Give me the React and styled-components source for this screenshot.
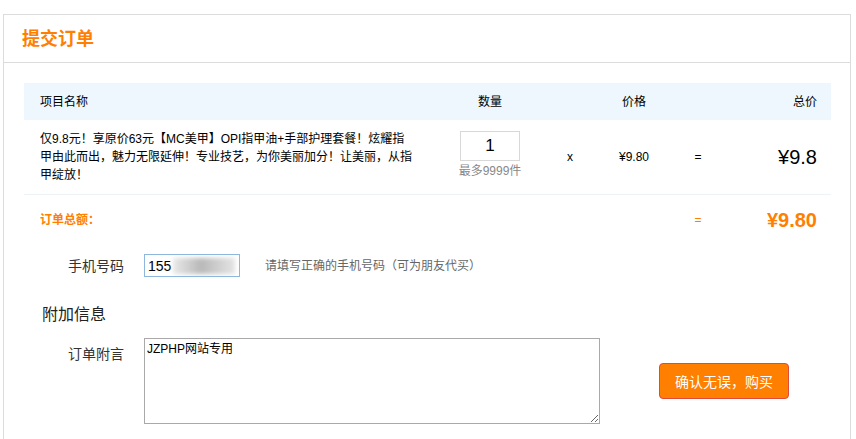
import React from "react";
import styled, { createGlobalStyle } from "styled-components";

const Global = createGlobalStyle`
  html, body { margin: 0; padding: 0; background: #fff; }
  body {
    font-family: "Liberation Sans", "Noto Sans CJK SC", sans-serif;
    color: #333;
    font-size: 12px;
  }
  * { box-sizing: border-box; }
`;

const Panel = styled.div`
  margin: 14px 0 0 3px;
  width: 848px;
  height: 440px;
  border: 1px solid #dcdcdc;
  border-bottom: none;
`;

const PanelHead = styled.div`
  height: 48px;
  border-bottom: 1px solid #dcdcdc;
  display: flex;
  align-items: center;
  padding-left: 18px;
`;

const Title = styled.h2`
  margin: 0;
  font-size: 18px;
  font-weight: bold;
  color: #ff8000;
  line-height: 24px;
`;

const PanelBody = styled.div`
  padding: ${(p) => p.$pt || "20px"} 19px 0 20px;
`;

const cols = "416px 100px 60px 68px 60px 102px";

const HeadRow = styled.div`
  display: grid;
  grid-template-columns: ${cols};
  height: 37px;
  align-items: center;
  background: #eef7fe;
  font-weight: bold;
  color: #000;
  font-size: 12px;
`;

const Cell = styled.div`
  text-align: ${(p) => p.$align || "center"};
  padding-left: ${(p) => (p.$align === "left" ? "16px" : "0")};
  padding-right: ${(p) => (p.$align === "right" ? "13px" : "0")};
  color: ${(p) => p.$color || "inherit"};
  font-size: ${(p) => p.$size || "12px"};
  font-weight: ${(p) => (p.$bold ? "bold" : "normal")};
  line-height: ${(p) => p.$lh || "18px"};
`;

const ItemRow = styled.div`
  display: grid;
  grid-template-columns: ${cols};
  height: 75px;
  align-items: center;
  border-bottom: 1px solid #eef3f8;
  color: #000;
`;

const NameLine = styled.span`
  display: block;
  white-space: nowrap;
`;

const QtyBox = styled.div`
  display: flex;
  flex-direction: column;
  align-items: center;
  margin-top: -4px;
`;

const QtyInput = styled.div`
  width: 60px;
  height: 30px;
  border: 1px solid #d8d8d8;
  font-size: 17px;
  line-height: 28px;
  text-align: center;
  color: #000;
`;

const QtyNote = styled.div`
  color: #888;
  font-size: 12px;
  line-height: 16px;
  margin-top: 2px;
`;

const TotalRow = styled.div`
  display: grid;
  grid-template-columns: ${cols};
  height: 50px;
  align-items: center;
`;

const FormRow = styled.div`
  display: flex;
  align-items: center;
  margin-top: ${(p) => p.$mt || "0"};
`;

const Label = styled.div`
  width: 100px;
  text-align: right;
  font-size: 14px;
  line-height: 20px;
  color: #333;
  margin-right: 20px;
  align-self: ${(p) => (p.$top ? "flex-start" : "center")};
  padding-top: ${(p) => (p.$top ? "6px" : "0")};
`;

const PhoneInput = styled.div`
  width: 96px;
  height: 23px;
  border: 1px solid #8db7dc;
  display: flex;
  align-items: center;
  padding-left: 3px;
  font-size: 14px;
  color: #000;
  overflow: hidden;
`;

const Blur = styled.span`
  display: inline-block;
  width: 62px;
  height: 16px;
  margin-left: 2px;
  background: linear-gradient(90deg, #e8e8e8 0%, #cfcfcf 25%, #b8b8b8 45%, #c9c9c9 65%, #e4e4e4 100%);
  filter: blur(2px);
`;

const Hint = styled.div`
  margin-left: 25px;
  font-size: 12px;
  color: #666;
  line-height: 18px;
`;

const Section = styled.h3`
  margin: 26px 0 0 38px;
  font-size: 16px;
  font-weight: normal;
  color: #222;
  line-height: 24px;
`;

const Note = styled.textarea`
  width: 456px;
  height: 86px;
  border: 1px solid #a9a9a9;
  padding: 2px 2px;
  font-family: "Liberation Sans", "Noto Sans CJK SC", sans-serif;
  font-size: 12px;
  line-height: 16px;
  color: #000;
  resize: both;
  margin: 0;
  outline: none;
`;

const BuyButton = styled.button`
  margin-left: 59px;
  width: 130px;
  height: 36px;
  background: #ff8000;
  border: 1px solid #e04a3a;
  border-radius: 4px;
  color: #fff;
  font-size: 14px;
  font-family: "Liberation Sans", "Noto Sans CJK SC", sans-serif;
  cursor: pointer;
`;

export default function App() {
  return (
    <>
      <Global />
      <Panel>
        <PanelHead>
          <Title>提交订单</Title>
        </PanelHead>
        <PanelBody>
          <HeadRow>
            <Cell $align="left">项目名称</Cell>
            <Cell>数量</Cell>
            <Cell />
            <Cell>价格</Cell>
            <Cell />
            <Cell $align="right">总价</Cell>
          </HeadRow>
          <ItemRow>
            <Cell $align="left">
              <NameLine>仅9.8元！享原价63元【MC美甲】OPI指甲油+手部护理套餐！炫耀指</NameLine>
              <NameLine>甲由此而出，魅力无限延伸！专业技艺，为你美丽加分！让美丽，从指</NameLine>
              <NameLine>甲绽放！</NameLine>
            </Cell>
            <QtyBox>
              <QtyInput>1</QtyInput>
              <QtyNote>最多9999件</QtyNote>
            </QtyBox>
            <Cell>x</Cell>
            <Cell>¥9.80</Cell>
            <Cell>=</Cell>
            <Cell $align="right" $size="20px" $lh="26px">¥9.8</Cell>
          </ItemRow>
          <TotalRow>
            <Cell $align="left" $color="#ff8000" $bold>订单总额：</Cell>
            <Cell />
            <Cell />
            <Cell />
            <Cell $color="#ff8000">=</Cell>
            <Cell $align="right" $color="#ff8000" $size="20px" $lh="26px" $bold>¥9.80</Cell>
          </TotalRow>
          <FormRow $mt="9px">
            <Label>手机号码</Label>
            <PhoneInput>155<Blur /></PhoneInput>
            <Hint>请填写正确的手机号码（可为朋友代买）</Hint>
          </FormRow>
        </PanelBody>
        <Section>附加信息</Section>
        <PanelBody $pt="11px">
          <FormRow>
            <Label $top>订单附言</Label>
            <Note defaultValue="JZPHP网站专用" />
            <BuyButton>确认无误，购买</BuyButton>
          </FormRow>
        </PanelBody>
      </Panel>
    </>
  );
}
